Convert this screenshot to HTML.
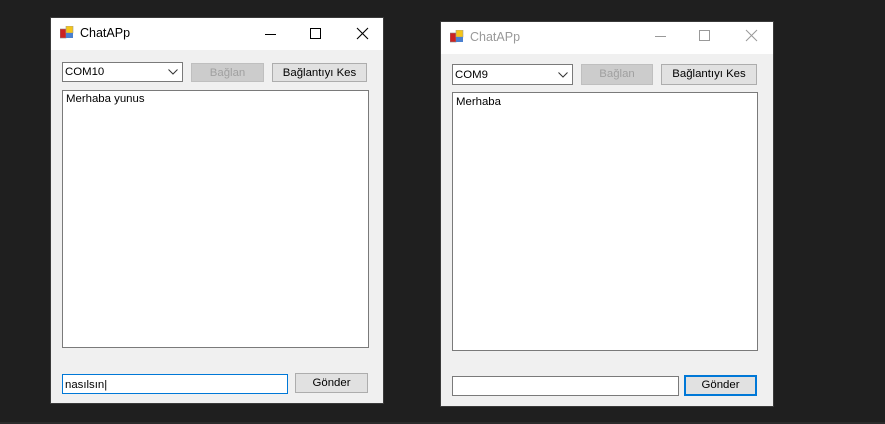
<!DOCTYPE html>
<html><head><style>
*{box-sizing:border-box;margin:0;padding:0}
body{width:885px;height:424px;background:#1f1f1f;position:relative;overflow:hidden;font-family:"Liberation Sans",sans-serif;font-size:11.4px;color:#000}
.strip{position:absolute;left:0;top:422px;width:885px;height:2px;background:#2b2b2b}
.win{position:absolute;background:#f0f0f0;border:1px solid #3a3a3a}
.tb{position:absolute;left:0;top:0;right:0;height:32px;background:#fff}
.title{position:absolute;left:29px;top:8px;font-size:12.5px}
.ic{position:absolute;left:9px;top:8px;width:14px;height:14px}
.a{position:absolute}
.box{position:absolute;background:#fff;border:1px solid #7a7a7a}
.btn{position:absolute;background:#e1e1e1;border:1px solid #adadad;text-align:center;line-height:18px}
.dis{background:#cccccc;border-color:#bfbfbf;color:#a0a0a0}
</style></head><body>
<div class="strip"></div>

<div class="win" style="left:50px;top:17px;width:334px;height:387px">
 <div class="tb">
  <svg class="ic" viewBox="0 0 14 14"><rect x="0" y="3" width="6" height="9" fill="#c22" stroke="#888" stroke-width=".6"/><rect x="6" y="0" width="7" height="7" fill="#f5c518" stroke="#999" stroke-width=".6"/><rect x="6" y="7" width="7" height="5" fill="#4a80d0"/></svg>
  <div class="title">ChatAPp</div>
  <svg class="a" style="left:210px;top:8px" width="120" height="16"><line x1="4" y1="8.5" x2="15" y2="8.5" stroke="#000"/><rect x="49.5" y="2.5" width="10" height="10" fill="none" stroke="#000"/><path d="M96 2 L107 13 M107 2 L96 13" stroke="#000" stroke-width="1.1"/></svg>
 </div>
 <div class="box" style="left:11px;top:44px;width:121px;height:20px;padding:2px 2px;line-height:14px">COM10<svg class="a" style="right:4px;top:6px" width="10" height="6"><path d="M0.5 0.5 L5 5 L9.5 0.5" stroke="#333" fill="none"/></svg></div>
 <div class="btn dis" style="left:140px;top:45px;width:73px;height:19px">Bağlan</div>
 <div class="btn" style="left:221px;top:45px;width:95px;height:19px">Bağlantıyı Kes</div>
 <div class="box" style="left:11px;top:72px;width:307px;height:258px;padding:2px 3px">Merhaba yunus</div>
 <div class="box" style="left:11px;top:356px;width:226px;height:20px;border-color:#0078d7;padding:3px 2px;line-height:14px">nasılsın|</div>
 <div class="btn" style="left:244px;top:355px;width:73px;height:20px">Gönder</div>
</div>

<div class="win" style="left:440px;top:21px;width:334px;height:386px">
 <div class="tb">
  <svg class="ic" viewBox="0 0 14 14"><rect x="0" y="3" width="6" height="9" fill="#c22" stroke="#888" stroke-width=".6"/><rect x="6" y="0" width="7" height="7" fill="#f5c518" stroke="#999" stroke-width=".6"/><rect x="6" y="7" width="7" height="5" fill="#4a80d0"/></svg>
  <div class="title" style="color:#999">ChatAPp</div>
  <svg class="a" style="left:210px;top:6px" width="120" height="16"><line x1="4" y1="8.5" x2="15" y2="8.5" stroke="#999"/><rect x="48.5" y="2.5" width="10" height="10" fill="none" stroke="#999"/><path d="M95 2 L106 13 M106 2 L95 13" stroke="#999" stroke-width="1"/></svg>
 </div>
 <div class="box" style="left:11px;top:42px;width:121px;height:21px;padding:3px 2px;line-height:14px">COM9<svg class="a" style="right:4px;top:7px" width="10" height="6"><path d="M0.5 0.5 L5 5 L9.5 0.5" stroke="#333" fill="none"/></svg></div>
 <div class="btn dis" style="left:140px;top:42px;width:72px;height:21px;line-height:19px">Bağlan</div>
 <div class="btn" style="left:220px;top:42px;width:96px;height:21px;line-height:19px">Bağlantıyı Kes</div>
 <div class="box" style="left:11px;top:70px;width:306px;height:259px;padding:3px 3px">Merhaba</div>
 <div class="box" style="left:11px;top:354px;width:227px;height:20px"></div>
 <div class="btn" style="left:243px;top:353px;width:73px;height:21px;border:2px solid #0078d7;line-height:17px">Gönder</div>
</div>
</body></html>
